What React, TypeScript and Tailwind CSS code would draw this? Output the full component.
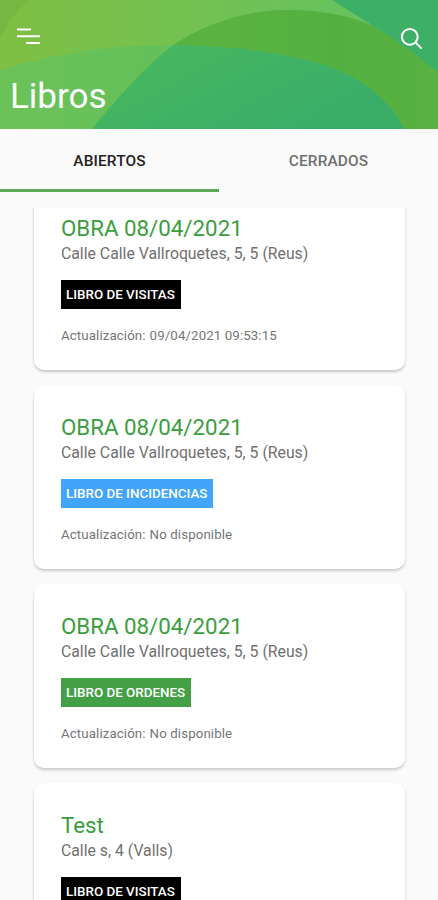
interface BookInterface {
  id: number
  title: string
  address: string
  label: string
  labelClass: string
  updated?: string
}

const books: BookInterface[] = [
  {
    id: 1,
    title: 'OBRA 08/04/2021',
    address: 'Calle Calle Vallroquetes, 5, 5 (Reus)',
    label: 'LIBRO DE VISITAS',
    labelClass: 'bg-black',
    updated: '09/04/2021 09:53:15',
  },
  {
    id: 2,
    title: 'OBRA 08/04/2021',
    address: 'Calle Calle Vallroquetes, 5, 5 (Reus)',
    label: 'LIBRO DE INCIDENCIAS',
    labelClass: 'bg-[#42a5f9]',
  },
  {
    id: 3,
    title: 'OBRA 08/04/2021',
    address: 'Calle Calle Vallroquetes, 5, 5 (Reus)',
    label: 'LIBRO DE ORDENES',
    labelClass: 'bg-[#43a047]',
  },
  {
    id: 4,
    title: 'Test',
    address: 'Calle s, 4 (Valls)',
    label: 'LIBRO DE VISITAS',
    labelClass: 'bg-black',
  },
]

const HeaderWaves = () => (
  <svg
    className="absolute inset-0 h-full w-full"
    viewBox="0 0 438 129"
    preserveAspectRatio="none"
    aria-hidden="true"
  >
    <defs>
      <linearGradient id="base" x1="0" y1="0" x2="1" y2="0">
        <stop offset="0" stopColor="#7fbf43" />
        <stop offset="0.4" stopColor="#74c150" />
        <stop offset="0.9" stopColor="#64c262" />
      </linearGradient>
      <linearGradient id="hill" x1="0" y1="0" x2="1" y2="0">
        <stop offset="0" stopColor="#6cc257" />
        <stop offset="1" stopColor="#58bd60" />
      </linearGradient>
      <linearGradient id="overlap" x1="0" y1="0" x2="1" y2="0.4">
        <stop offset="0" stopColor="#4fba5c" />
        <stop offset="1" stopColor="#3aae68" />
      </linearGradient>
      <linearGradient id="arc" x1="0" y1="0" x2="1" y2="0">
        <stop offset="0" stopColor="#4fae42" />
        <stop offset="0.35" stopColor="#5bb341" />
        <stop offset="0.7" stopColor="#53b03f" />
        <stop offset="1" stopColor="#58b142" />
      </linearGradient>
      <clipPath id="arcClip">
        <path d="M92 129C118 98 145 66 175 44C206 23 246 10 286 10C320 10 350 15 375 27C400 42 420 58 438 72V129Z" />
      </clipPath>
    </defs>
    <path fill="url(#base)" d="M0 0H438V129H0Z" />
    <path fill="#78b842" d="M0 0H30C17 10 7 23 0 38Z" />
    <path fill="#3eaf66" d="M332 0H438V80L375 27Z" />
    <path
      fill="url(#hill)"
      d="M0 70C55 53 110 45 175 45C240 46 300 54 340 71C371 85 394 106 404 129H0Z"
    />
    <path
      fill="url(#arc)"
      d="M92 129C118 98 145 66 175 44C206 23 246 10 286 10C320 10 350 15 375 27C400 42 420 58 438 72V129Z"
    />
    <path
      fill="url(#overlap)"
      clipPath="url(#arcClip)"
      d="M0 70C55 53 110 45 175 45C240 46 300 54 340 71C371 85 394 106 404 129H0Z"
    />
  </svg>
)

const Header = () => (
  <header className="relative h-[129px] shrink-0 overflow-hidden text-white">
    <HeaderWaves />
    <div className="relative flex h-full flex-col pt-[27px]">
      <div className="flex items-start justify-between pr-[15px] pl-[17px]">
        <button aria-label="Menú">
          <svg width="23" height="20" fill="none" stroke="currentColor" strokeWidth="2">
            <path d="M0 2.5H14M0 9.2H23M9 15.9H23" />
          </svg>
        </button>
        <button aria-label="Buscar">
          <svg width="22" height="24" fill="none" stroke="currentColor" strokeWidth="2">
            <circle cx="8.8" cy="9.8" r="7.9" />
            <path d="M14.4 15.4L20.6 21.6" />
          </svg>
        </button>
      </div>
      <h1 className="mt-[25px] pl-[10px] text-[35px] leading-[42px]">Libros</h1>
    </div>
  </header>
)

const Tabs = () => (
  <nav className="grid h-[63px] shrink-0 grid-cols-2 text-[15.4px] font-medium tracking-[0.15px]">
    <button className="border-b-3 border-[#5eaa5c] pt-[6px] text-[#222222]">
      ABIERTOS
    </button>
    <button className="border-b-3 border-transparent pt-[6px] text-[#707070]">
      CERRADOS
    </button>
  </nav>
)

const BookCard: React.FC<{ book: BookInterface }> = ({ book }) => {
  const { title, address, label, labelClass, updated } = book

  return (
    <article className="h-[184px] shrink-0 rounded-[10px] bg-white px-[27px] pt-[28px] shadow-[0_2px_3px_rgba(0,0,0,0.2)]">
      <h2 className="text-[22.3px] leading-[28px] text-[#3a9e3e]">{title}</h2>
      <p className="text-[15.8px] leading-[24px] text-[#707070]">{address}</p>
      <div className="mt-[14px] flex">
        <span
          className={`h-[29px] pr-[6px] pl-[5px] text-[13.4px] leading-[30px] font-medium text-white ${labelClass}`}
        >
          {label}
        </span>
      </div>
      <p className="mt-[17px] flex gap-[4px] text-[13.3px] leading-[20px] tracking-[0.1px] text-[#757575]">
        <span>Actualización:</span>
        <span>{updated ?? 'No disponible'}</span>
      </p>
    </article>
  )
}

export default function App() {
  return (
    <div className="flex h-[900px] w-full flex-col overflow-hidden bg-[#fafafa] font-['Roboto',sans-serif]">
      <Header />
      <Tabs />
      <main className="mt-[16px] min-h-0 flex-1 overflow-hidden">
        <div className="-mt-[22px] flex flex-col gap-[15px] pr-[33px] pl-[34px]">
          {books.map((book) => (
            <BookCard key={book.id} book={book} />
          ))}
        </div>
      </main>
    </div>
  )
}
